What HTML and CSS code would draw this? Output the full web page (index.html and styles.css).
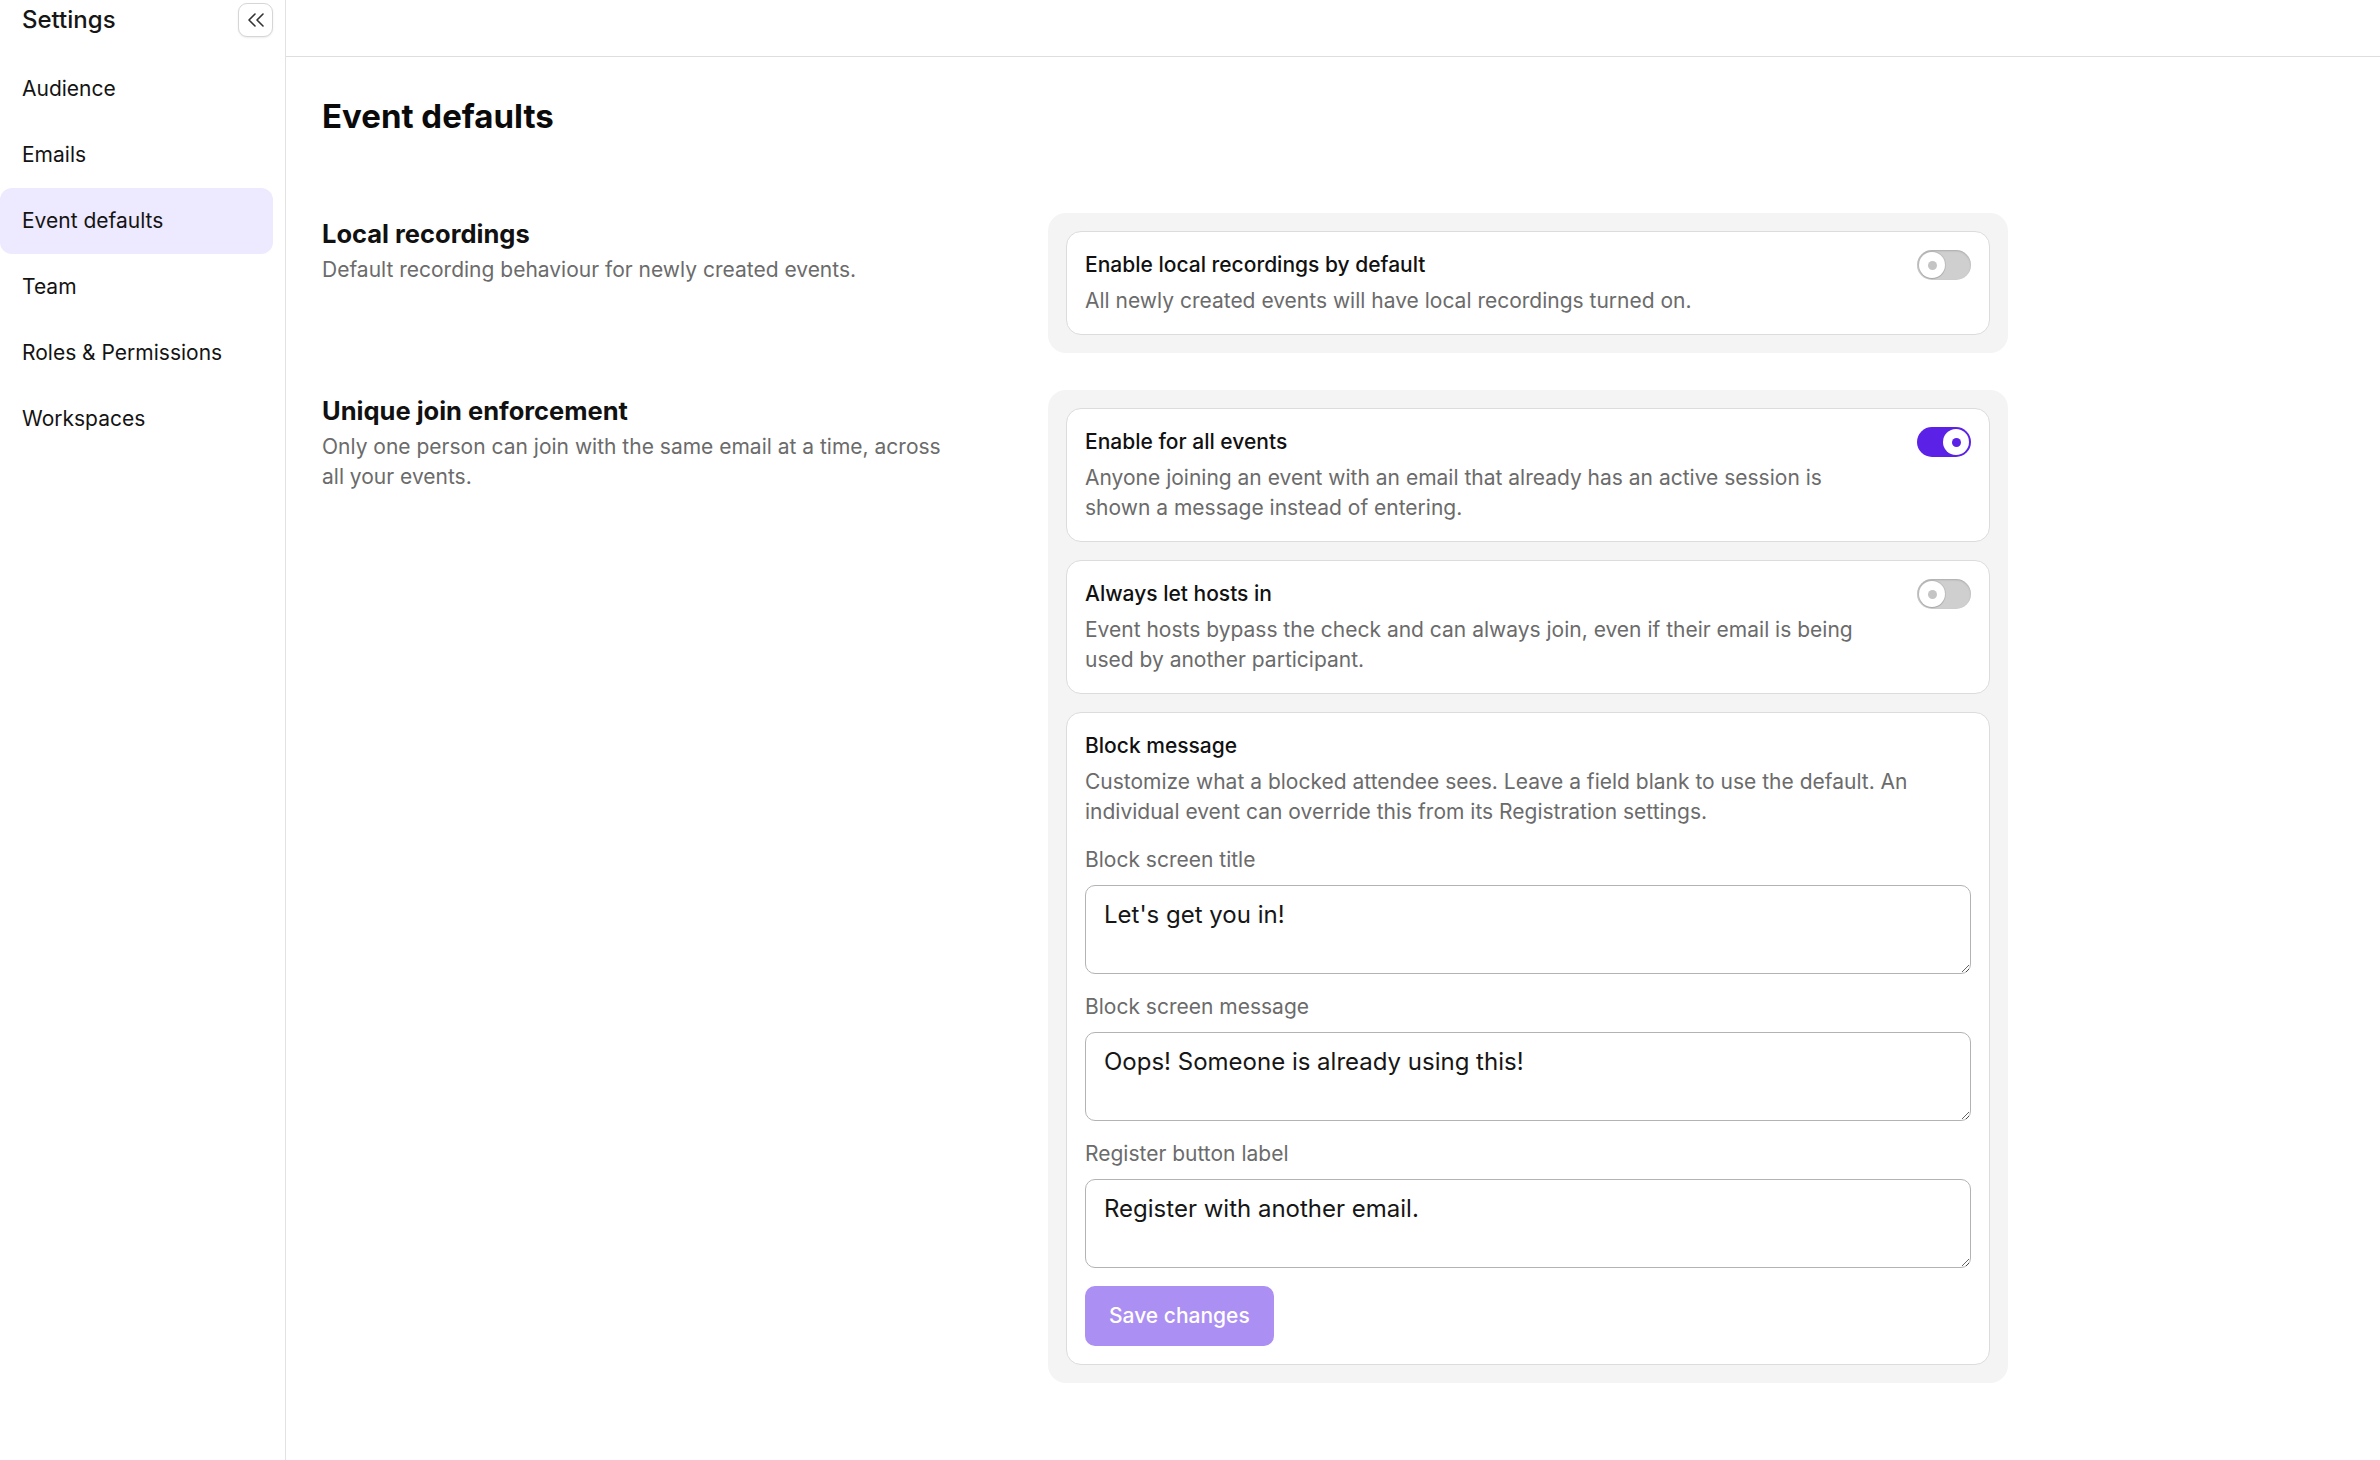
FILE: index.html
```html
<!DOCTYPE html>
<html lang="en">
<head>
<meta charset="utf-8">
<title>Settings · Event defaults</title>
<link rel="stylesheet" href="styles.css">
</head>
<body>
<div class="app">
  <aside class="sidebar">
    <div class="sidebar-head">
      <span class="sidebar-title">Settings</span>
      <button class="collapse-btn" type="button" aria-label="Collapse sidebar">
        <svg width="18" height="14" viewBox="0 0 18 14" fill="none" stroke="currentColor" stroke-width="1.6" stroke-linecap="round" stroke-linejoin="round">
          <path d="M8 1 L2 7 L8 13"/>
          <path d="M16 1 L10 7 L16 13"/>
        </svg>
      </button>
    </div>
    <nav class="nav">
      <a class="nav-item">Audience</a>
      <a class="nav-item">Emails</a>
      <a class="nav-item is-active">Event defaults</a>
      <a class="nav-item">Team</a>
      <a class="nav-item">Roles &amp; Permissions</a>
      <a class="nav-item">Workspaces</a>
    </nav>
  </aside>

  <main class="main">
    <header class="topbar"></header>
    <div class="content">
      <h1 class="page-title">Event defaults</h1>

      <section class="section">
        <div class="section-info">
          <h2 class="section-title">Local recordings</h2>
          <p class="section-desc">Default recording behaviour for newly created events.</p>
        </div>
        <div class="panel">
          <div class="card card-row">
            <div class="card-text">
              <div class="card-title">Enable local recordings by default</div>
              <div class="card-desc">All newly created events will have local recordings turned on.</div>
            </div>
            <span class="toggle"><span class="knob"><span class="dot"></span></span></span>
          </div>
        </div>
      </section>

      <section class="section">
        <div class="section-info">
          <h2 class="section-title">Unique join enforcement</h2>
          <p class="section-desc">Only one person can join with the same email at a time, across all your events.</p>
        </div>
        <div class="panel">
          <div class="card card-row">
            <div class="card-text">
              <div class="card-title">Enable for all events</div>
              <div class="card-desc">Anyone joining an event with an email that already has an active session is shown a message instead of entering.</div>
            </div>
            <span class="toggle is-on"><span class="knob"><span class="dot"></span></span></span>
          </div>

          <div class="card card-row">
            <div class="card-text">
              <div class="card-title">Always let hosts in</div>
              <div class="card-desc">Event hosts bypass the check and can always join, even if their email is being used by another participant.</div>
            </div>
            <span class="toggle"><span class="knob"><span class="dot"></span></span></span>
          </div>

          <div class="card">
            <div class="card-title">Block message</div>
            <div class="card-desc">Customize what a blocked attendee sees. Leave a field blank to use the default. An individual event can override this from its Registration settings.</div>

            <label class="field">
              <span class="field-label">Block screen title</span>
              <textarea class="field-input">Let's get you in!</textarea>
            </label>
            <label class="field">
              <span class="field-label">Block screen message</span>
              <textarea class="field-input">Oops! Someone is already using this!</textarea>
            </label>
            <label class="field">
              <span class="field-label">Register button label</span>
              <textarea class="field-input">Register with another email.</textarea>
            </label>

            <button class="save-btn" type="button" disabled>Save changes</button>
          </div>
        </div>
      </section>
    </div>
  </main>
</div>
</body>
</html>
```
FILE: styles.css
```css
* {
  box-sizing: border-box;
}

html, body {
  margin: 0;
  height: 100%;
  background: #ffffff;
}

body {
  font-family: Inter, "Noto Sans", "Liberation Sans", sans-serif;
  color: #111111;
  font-size: 21px;
  line-height: 30px;
}

.app {
  display: flex;
  min-height: 100vh;
}

/* ---------- sidebar ---------- */

.sidebar {
  width: 286px;
  flex-shrink: 0;
  border-right: 1px solid #e2e2e2;
  padding-right: 12px;
}

.sidebar-head {
  display: flex;
  align-items: flex-start;
  justify-content: space-between;
  height: 40px;
  padding-left: 22px;
}

.sidebar-title {
  margin-top: 2px;
  font-size: 24px;
  line-height: 36px;
  font-weight: 500;
  color: #161616;
}

.collapse-btn {
  margin-top: 3px;
  width: 35px;
  height: 34px;
  padding: 0;
  display: flex;
  align-items: center;
  justify-content: center;
  background: #ffffff;
  border: 1px solid #d6d6d6;
  border-radius: 9px;
  box-shadow: 0 1px 2px rgba(0, 0, 0, 0.08);
  color: #333333;
  cursor: pointer;
}

.nav {
  margin-top: 16px;
  display: flex;
  flex-direction: column;
}

.nav-item {
  display: block;
  padding: 18px 22px;
  font-size: 21px;
  line-height: 30px;
  color: #141414;
  border-radius: 0 12px 12px 0;
  cursor: pointer;
}

.nav-item.is-active {
  background: #ede9fe;
  border-radius: 12px;
}

/* ---------- main area ---------- */

.main {
  flex: 1;
  display: flex;
  flex-direction: column;
  min-width: 0;
}

.topbar {
  height: 57px;
  border-bottom: 1px solid #dedede;
  flex-shrink: 0;
}

.content {
  padding: 38px 36px 36px;
}

.page-title {
  margin: 0 0 76px;
  font-size: 33px;
  line-height: 42px;
  font-weight: 700;
  letter-spacing: 0;
  color: #0a0a0a;
}

.section {
  display: grid;
  grid-template-columns: 653px 960px;
  column-gap: 73px;
  align-items: start;
  margin-bottom: 37px;
}

.section-info {
  max-width: 630px;
}

.section-title {
  margin: 0;
  font-size: 25.5px;
  line-height: 42px;
  font-weight: 700;
  letter-spacing: 0;
  color: #111111;
}

.section-desc {
  margin: 0;
  font-size: 21px;
  line-height: 30px;
  color: #6b6b6b;
}

/* ---------- grouped cards ---------- */

.panel {
  background: #f4f4f4;
  border-radius: 18px;
  padding: 18px;
  display: flex;
  flex-direction: column;
  gap: 18px;
}

.card {
  background: #ffffff;
  border: 1px solid #dcdcdc;
  border-radius: 15px;
  padding: 18px;
}

.card-row {
  display: flex;
  align-items: flex-start;
  gap: 48px;
}

.card-text {
  flex: 1;
  min-width: 0;
}

.card-title {
  font-size: 21px;
  line-height: 30px;
  font-weight: 500;
  color: #111111;
}

.card-desc {
  margin-top: 6px;
  font-size: 21px;
  line-height: 30px;
  color: #6b6b6b;
}

/* ---------- switch ---------- */

.toggle {
  width: 54px;
  height: 30px;
  flex-shrink: 0;
  display: flex;
  align-items: center;
  justify-content: flex-start;
  padding: 0 2px;
  border-radius: 15px;
  background: #cfcfcf;
  box-shadow: inset 0 1px 2px rgba(0, 0, 0, 0.18);
}

.knob {
  width: 26px;
  height: 26px;
  border-radius: 50%;
  background: #ffffff;
  box-shadow: 0 0 0 1px rgba(0, 0, 0, 0.08), 0 1px 1px rgba(0, 0, 0, 0.12);
  display: flex;
  align-items: center;
  justify-content: center;
}

.dot {
  width: 9px;
  height: 9px;
  border-radius: 50%;
  background: #c4c4c4;
}

.toggle.is-on {
  background: #5b21e6;
  justify-content: flex-end;
  box-shadow: none;
}

.toggle.is-on .knob {
  box-shadow: none;
}

.toggle.is-on .dot {
  background: #5b21e6;
}

/* ---------- form fields ---------- */

.field {
  display: block;
  margin-top: 18px;
}

.field-label {
  display: block;
  margin-bottom: 10px;
  font-size: 21px;
  line-height: 30px;
  color: #6b6b6b;
}

.field-input {
  display: block;
  width: 100%;
  height: 89px;
  margin: 0;
  padding: 11px 18px;
  border: 1px solid #b3b3b3;
  border-radius: 10px;
  font-family: Inter, "Noto Sans", "Liberation Sans", sans-serif;
  font-size: 24px;
  line-height: 36px;
  color: #161616;
  background: #ffffff;
  resize: vertical;
  outline: none;
}

.save-btn {
  margin-top: 18px;
  display: inline-block;
  height: 60px;
  padding: 0 24px;
  border: none;
  border-radius: 10px;
  background: #5b21e6;
  opacity: 0.5;
  color: #ffffff;
  font-family: Inter, "Noto Sans", "Liberation Sans", sans-serif;
  font-size: 21px;
  line-height: 30px;
  font-weight: 500;
}
```
